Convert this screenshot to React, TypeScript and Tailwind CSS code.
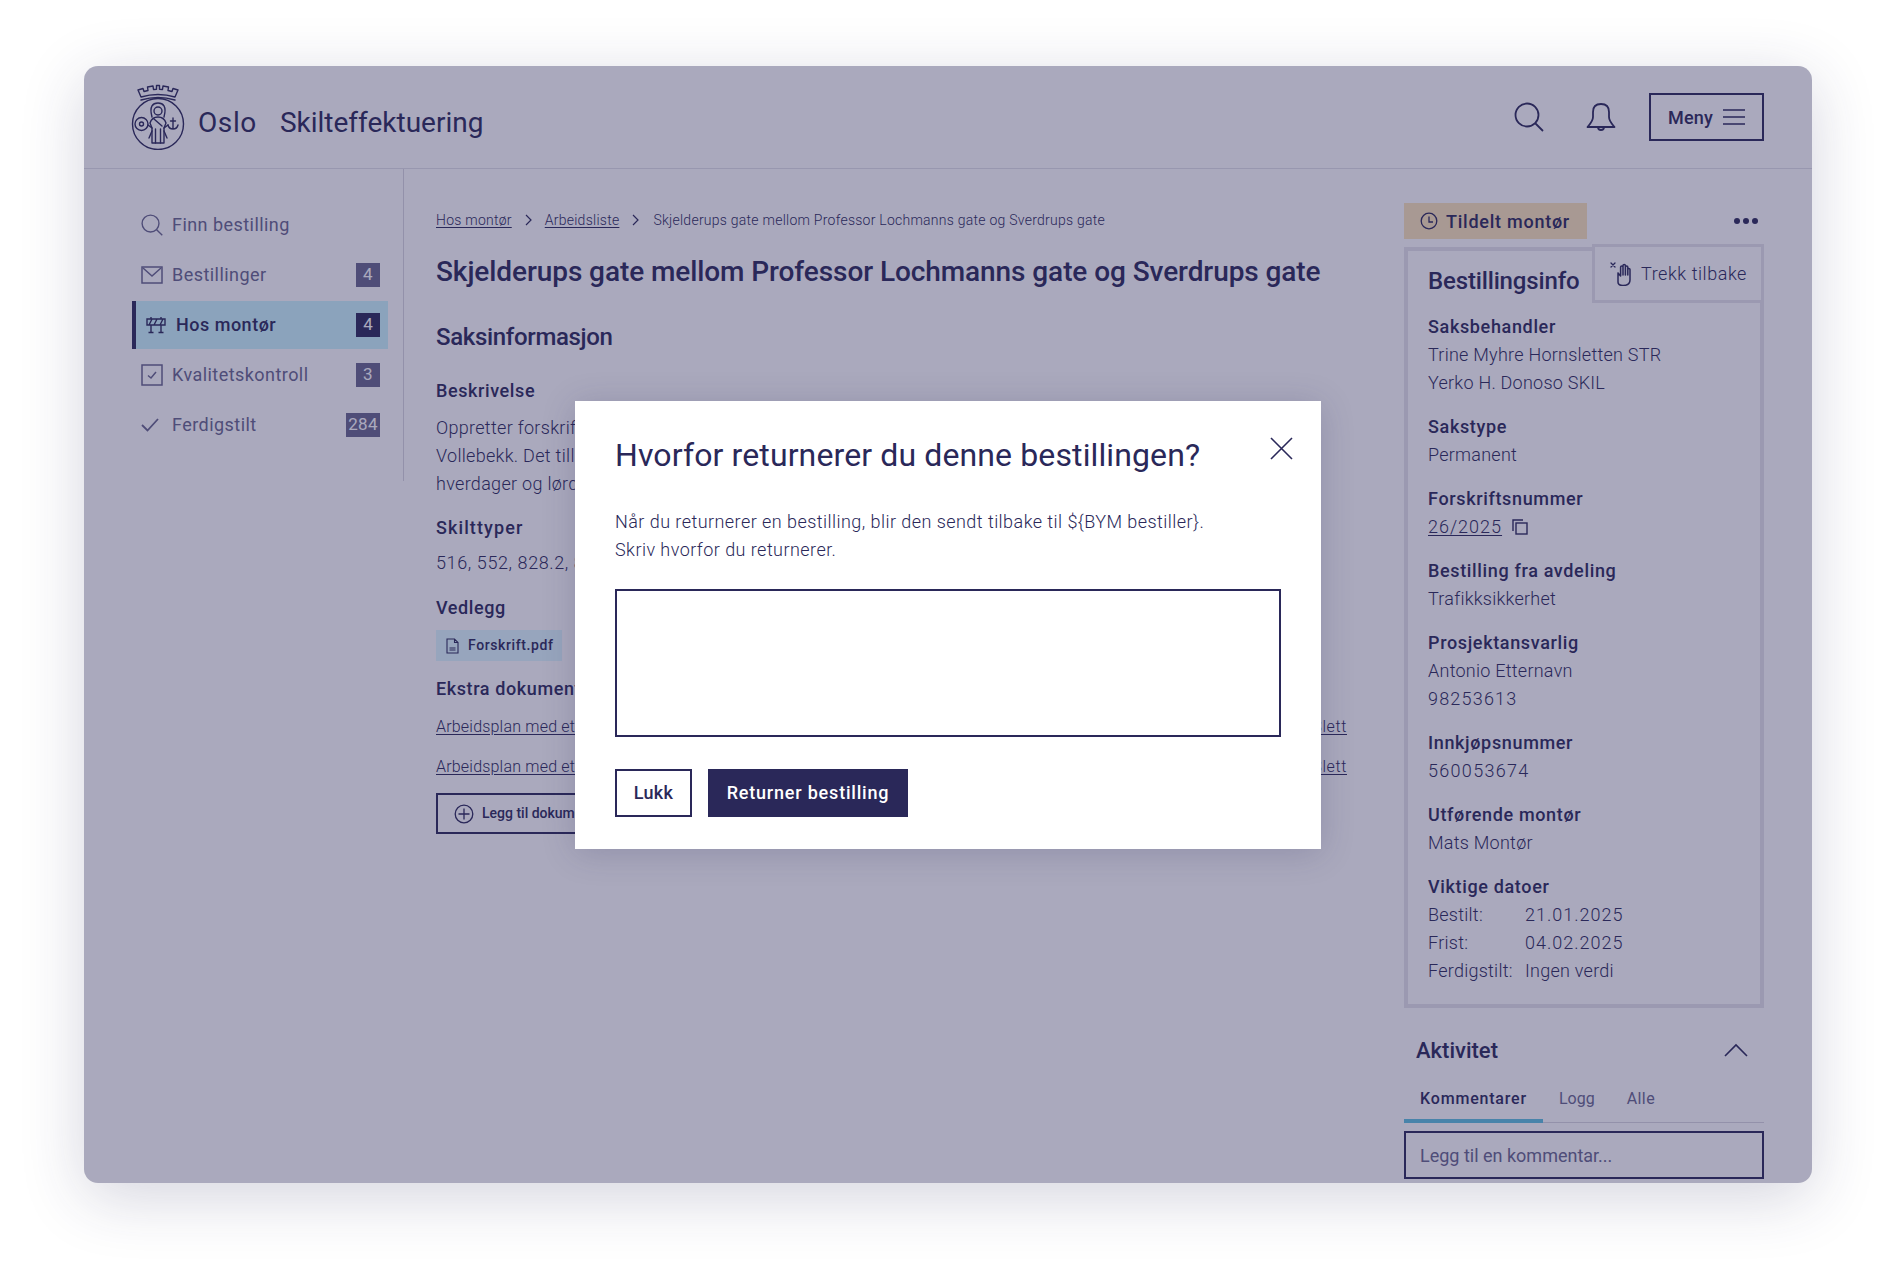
const navy = '#2a2859'

function Logo() {
  return (
    <svg width="54" height="66" viewBox="0 0 54 66" fill="none" stroke={navy} strokeWidth="1.4" strokeLinejoin="round" strokeLinecap="round">
      <path d="M7 6 L10 13 Q27 8 44 13 L47 6 L42 4.5 L41 7.5 L37 6.5 L37.5 3 L32 2 L31.5 5.5 L28.5 5.2 L28.5 1.5 L25.5 1.5 L25.5 5.2 L22.5 5.5 L22 2 L16.5 3 L17 6.5 L13 7.5 L12 4.5 Z" />
      <path d="M10 16 Q27 11 44 16" />
      <circle cx="27" cy="40" r="25.5" />
      <path d="M21 33 C18 22 22 19 27 19 C32 19 36 22 33 33" />
      <circle cx="27" cy="27" r="4" />
      <path d="M19 39 Q21 33 27 33 Q33 33 35 39 L33 44 L33 59 L21 59 L21 44 Z" />
      <path d="M24.5 45 L24.5 59 M29.5 45 L29.5 59 M23 35 L31 42" />
      <path d="M17 41 L21 44 M37 41 L33 44 M18 54 L21 47 M36 54 L33 47" />
      <circle cx="10.5" cy="40" r="6.5" />
      <circle cx="10.5" cy="40" r="2" />
      <path d="M42 34 L42 45 M39.5 37 L44.5 37 M37 41 Q38 45 42 45 Q46 45 47 41" />
    </svg>
  )
}

function SearchIcon({ size }: { size: number }) {
  return (
    <svg width={size} height={size} viewBox="0 0 30 30" fill="none" stroke="currentColor" strokeWidth={size > 25 ? 1.8 : 1.9}>
      <circle cx="13" cy="13" r="11.5" />
      <path d="M21 21 L29 29" />
    </svg>
  )
}

function BellIcon() {
  return (
    <svg width="30" height="30" viewBox="0 0 30 30" fill="none" stroke="currentColor" strokeWidth="1.8" strokeLinejoin="round">
      <path d="M15 2 C9 2 7 6 7 10 L7 15 C7 19 4 22 1.5 25 L28.5 25 C26 22 23 19 23 15 L23 10 C23 6 21 2 15 2 Z" />
      <path d="M12 25 C12 29 18 29 18 25" />
    </svg>
  )
}

function MenuIcon() {
  return (
    <svg width="22" height="16" viewBox="0 0 22 16" fill="none" stroke="currentColor" strokeWidth="1.5">
      <path d="M0 1 H22 M0 8 H22 M0 15 H22" />
    </svg>
  )
}

function MailIcon() {
  return (
    <svg width="22" height="18" viewBox="0 0 22 18" fill="none" stroke="currentColor" strokeWidth="1.5">
      <rect x="1" y="1" width="20" height="16" />
      <path d="M2 2 L11 10 L20 2" />
    </svg>
  )
}

function BarrierIcon() {
  return (
    <svg width="20" height="18" viewBox="0 0 20 18" fill="none" stroke="currentColor" strokeWidth="1.4">
      <path d="M1 3 H19 V9 H1 Z M6 3 L3 9 M11 3 L8 9 M17 3 L14 9" />
      <path d="M5 9 V16 M15 9 V16 M2.5 16.5 H7.5 M12.5 16.5 H17.5 M5 1 V3 M15 1 V3" />
    </svg>
  )
}

function CheckboxIcon() {
  return (
    <svg width="22" height="22" viewBox="0 0 22 22" fill="none" stroke="currentColor" strokeWidth="1.5">
      <rect x="1" y="1" width="20" height="20" />
      <path d="M7 11.5 L10 14 L15 8" />
    </svg>
  )
}

function CheckIcon() {
  return (
    <svg width="18" height="14" viewBox="0 0 18 14" fill="none" stroke="currentColor" strokeWidth="1.8">
      <path d="M1 7 L6.5 12.5 L17 1" />
    </svg>
  )
}

function ClockIcon() {
  return (
    <svg width="18" height="18" viewBox="0 0 18 18" fill="none" stroke="currentColor" strokeWidth="1.3">
      <circle cx="9" cy="9" r="7.8" />
      <path d="M9 4.5 V10 H13" />
    </svg>
  )
}

function CopyIcon() {
  return (
    <svg width="16" height="16" viewBox="0 0 16 16" fill="none" stroke="currentColor" strokeWidth="1.4">
      <path d="M1 12 V1 H11" />
      <rect x="4" y="4" width="11" height="11" />
    </svg>
  )
}

function PdfIcon() {
  return (
    <svg width="13" height="16" viewBox="0 0 13 16" fill="none" stroke="currentColor" strokeWidth="1.1">
      <path d="M1 1 H8.5 L12 4.5 V15 H1 Z M8.5 1 V4.5 H12 M3.5 10 H9.5 M3.5 12 H9.5" />
    </svg>
  )
}

function PlusCircleIcon() {
  return (
    <svg width="20" height="20" viewBox="0 0 20 20" fill="none" stroke="currentColor" strokeWidth="1.3">
      <circle cx="10" cy="10" r="8.8" />
      <path d="M10 4.5 V15.5 M4.5 10 H15.5" />
    </svg>
  )
}

function ChevronRight() {
  return (
    <svg className="mx-[13px]" width="7" height="12" viewBox="0 0 7 12" fill="none" stroke={navy} strokeWidth="1.2">
      <path d="M1 1 L6 6 L1 11" />
    </svg>
  )
}

function HandIcon() {
  return (
    <svg width="24" height="24" viewBox="0 0 24 24" fill="none" stroke="currentColor" strokeWidth="1.5" strokeLinecap="round" strokeLinejoin="round">
      <path d="M1 1 L5 5 M5 1 L1 5" strokeWidth="1.3" />
      <path d="M8 11 V20 C8 22 10 23.5 13 23.5 C17 23.5 20 22 20 18 V7.5 C20 6 17.8 6 17.8 7.5 V13 M17.8 13 V5 C17.8 3.5 15.4 3.5 15.4 5 V13 M15.4 13 V3.5 C15.4 2 13 2 13 3.5 V13 M13 13 V5 C13 3.5 10.6 3.5 10.6 5 V14 L8 11" />
    </svg>
  )
}

function NavItem({ icon, label, count, active }: { icon: React.ReactNode; label: string; count?: string; active?: boolean }) {
  if (active) {
    return (
      <div className="flex items-center h-[48px] bg-[#cbf5fd] border-l-4 border-[#2a2859] pl-[10px] pr-[8px] text-[#2a2859]">
        <span className="w-[30px] flex"><BarrierIcon /></span>
        <span className="flex-1 text-[18px] font-medium tracking-[0.5px] mt-[-1px]">{label}</span>
        <span className="h-[24px] min-w-[24px] px-[3px] flex items-center justify-center bg-[#2a2859] text-white text-[17px]">{count}</span>
      </div>
    )
  }
  return (
    <div className="flex items-center h-[48px] pl-[9px] pr-[8px] text-[#68668d]">
      <span className="w-[31px] flex">{icon}</span>
      <span className="flex-1 text-[18px] tracking-[0.45px] mt-[-1px]">{label}</span>
      {count && <span className="h-[24px] min-w-[24px] px-[2px] flex items-center justify-center bg-[#68668d] text-white text-[17px] tracking-[0.4px]">{count}</span>}
    </div>
  )
}

function Info({ label, children }: { label: string; children: React.ReactNode }) {
  return (
    <div className="text-[18px] leading-[28px]">
      <div className="font-medium text-[#2a2859] tracking-[0.65px]">{label}</div>
      <div className="font-light text-[#2a2859] tracking-[0.25px]">{children}</div>
    </div>
  )
}

function DocLink() {
  return (
    <div className="flex justify-between h-[28px] items-center text-[16px] font-light text-[#2a2859] tracking-[0.2px]">
      <span className="underline underline-offset-2">Arbeidsplan med etablering av skilt.pdf</span>
      <span className="underline underline-offset-2 tracking-[0.6px]">Slett</span>
    </div>
  )
}

export default function App() {
  return (
    <div className="h-[1285px] bg-white pt-[66px] pl-[84px] text-[#2a2859] font-['Roboto',sans-serif]">
      <div className="relative w-[1728px] h-[1117px] rounded-[14px] overflow-hidden bg-white shadow-[0_14px_64px_rgba(42,40,89,0.2)]">
        <header className="flex items-center h-[103px] pl-[47px] pr-[48px] border-b border-[#e2e1e8]">
          <Logo />
          <span className="ml-[13px] mt-[12px] text-[28px] tracking-[0.6px]">Oslo</span>
          <span className="ml-[23px] mt-[12px] text-[28px]">Skilteffektuering</span>
          <div className="ml-auto flex items-center">
            <SearchIcon size={30} />
            <span className="ml-[42px]"><BellIcon /></span>
            <button className="ml-[33px] w-[115px] h-[48px] border-2 border-[#2a2859] flex items-center justify-center gap-[10px] text-[18px] font-medium tracking-[0.2px]">
              Meny <MenuIcon />
            </button>
          </div>
        </header>

        <div className="flex items-start">
          <aside className="w-[320px] shrink-0 pt-[32px] pb-[32px] pl-[48px] pr-[15px] border-r border-[#d9d8e0] flex flex-col gap-[2px]">
            <NavItem icon={<SearchIcon size={22} />} label="Finn bestilling" />
            <NavItem icon={<MailIcon />} label="Bestillinger" count="4" />
            <NavItem icon={<BarrierIcon />} label="Hos montør" count="4" active />
            <NavItem icon={<CheckboxIcon />} label="Kvalitetskontroll" count="3" />
            <NavItem icon={<CheckIcon />} label="Ferdigstilt" count="284" />
          </aside>

          <main className="flex-1 min-w-0 pl-[32px] pr-[57px] pt-[41px]">
            <div className="flex items-center h-[20px] text-[14px] font-light text-[#2a2859] tracking-[0.25px]">
              <span className="underline underline-offset-2">Hos montør</span>
              <ChevronRight />
              <span className="underline underline-offset-2">Arbeidsliste</span>
              <ChevronRight />
              <span className="ml-[1px]">Skjelderups gate mellom Professor Lochmanns gate og Sverdrups gate</span>
            </div>
            <h1 className="mt-[24px] text-[28px] leading-[36px] font-medium tracking-[-0.08px]">Skjelderups gate mellom Professor Lochmanns gate og Sverdrups gate</h1>
            <h2 className="mt-[31px] text-[24px] leading-[32px] font-medium tracking-[-0.33px]">Saksinformasjon</h2>
            <div className="mt-[24px] text-[18px] leading-[28px] font-medium tracking-[0.6px]">Beskrivelse</div>
            <p className="mt-[9px] text-[18px] leading-[28px] font-light w-[860px] tracking-[0.3px]">
              Oppretter forskrift om parkering forbudt langs Skjelderups gate på
              <br />
              Vollebekk. Det tillates kun korttidsparkering i to timer på
              <br />
              hverdager og lørdager mellom klokken 8 og 16.
            </p>
            <div className="mt-[16px] text-[18px] leading-[28px] font-medium tracking-[1.1px]">Skilttyper</div>
            <div className="mt-[7px] text-[18px] leading-[28px] font-light tracking-[0.6px]">516, 552, 828.2, 802.1</div>
            <div className="mt-[17px] text-[18px] leading-[28px] font-medium tracking-[0.6px]">Vedlegg</div>
            <div className="mt-[8px] w-[126px] h-[31px] bg-[#dff8ff] flex items-center gap-[9px] pl-[10px] text-[14px] font-medium tracking-[0.6px]">
              <PdfIcon /> Forskrift.pdf
            </div>
            <div className="mt-[14px] text-[18px] leading-[28px] font-medium tracking-[0.6px]">Ekstra dokumentasjon</div>
            <div className="mt-[10px] flex flex-col gap-[12px]">
              <DocLink />
              <DocLink />
            </div>
            <button className="mt-[12px] h-[41px] w-[220px] border-2 border-[#2a2859] flex items-center gap-[8px] pl-[16px] text-[14px] font-medium">
              <PlusCircleIcon /> Legg til dokument
            </button>
          </main>

          <section className="relative w-[360px] shrink-0 mr-[48px] pt-[34px]">
            <div className="flex items-center justify-between">
              <div className="w-[183px] h-[36px] bg-[#fce4ba] flex items-center gap-[8px] pl-[16px] text-[18px] font-medium tracking-[0.75px]">
                <ClockIcon /> Tildelt montør
              </div>
              <div className="flex gap-[3px] mr-[6px]">
                <span className="w-[6px] h-[6px] rounded-full bg-[#2a2859]" />
                <span className="w-[6px] h-[6px] rounded-full bg-[#2a2859]" />
                <span className="w-[6px] h-[6px] rounded-full bg-[#2a2859]" />
              </div>
            </div>
            <div className="mt-[8px] border-4 border-[#e6e5eb] pl-[20px] pt-[14px] pb-[19px] flex flex-col gap-[16px]">
              <h2 className="text-[24px] leading-[32px] font-medium tracking-[-0.15px]">Bestillingsinfo</h2>
              <Info label="Saksbehandler">Trine Myhre Hornsletten STR<br />Yerko H. Donoso SKIL</Info>
              <Info label="Sakstype">Permanent</Info>
              <Info label="Forskriftsnummer">
                <span className="flex items-center gap-[10px]"><span className="underline underline-offset-2 tracking-[1px]">26/2025</span><CopyIcon /></span>
              </Info>
              <Info label="Bestilling fra avdeling">Trafikksikkerhet</Info>
              <Info label="Prosjektansvarlig">Antonio Etternavn<br /><span className="tracking-[1.2px]">98253613</span></Info>
              <Info label="Innkjøpsnummer"><span className="tracking-[1.3px]">560053674</span></Info>
              <Info label="Utførende montør">Mats Montør</Info>
              <Info label="Viktige datoer">
                <div className="grid grid-cols-[97px_1fr]">
                  <span>Bestilt:</span><span className="tracking-[1px]">21.01.2025</span>
                  <span>Frist:</span><span className="tracking-[1px]">04.02.2025</span>
                  <span>Ferdigstilt:</span><span>Ingen verdi</span>
                </div>
              </Info>
            </div>
            <div className="mt-[25px] h-[34px] flex items-center justify-between pl-[12px] pr-[16px]">
              <span className="text-[22px] font-medium">Aktivitet</span>
              <svg width="24" height="14" viewBox="0 0 24 14" fill="none" stroke="currentColor" strokeWidth="1.6"><path d="M1 13 L12 2 L23 13" /></svg>
            </div>
            <div className="mt-[11px] h-[45px] flex border-b border-[#d9d8e0] text-[16px]">
              <div className="w-[139px] h-[45px] flex items-center justify-center border-b-4 border-[#5cc0e0] font-medium tracking-[0.8px]">Kommentarer</div>
              <div className="ml-[16px] h-[41px] flex items-center text-[#68668d]">Logg</div>
              <div className="ml-[32px] h-[41px] flex items-center text-[#68668d] tracking-[0.4px]">Alle</div>
            </div>
            <div className="mt-[8px] h-[48px] border-2 border-[#2a2859] flex items-center pl-[14px] text-[18px] text-[#68668d]">Legg til en kommentar...</div>
            <div className="absolute right-0 top-[75px] w-[172px] h-[59px] bg-white border-[3px] border-[#e6e5eb] flex items-center pl-[15px] gap-[7px] text-[18px] font-light tracking-[0.55px]">
              <HandIcon />
              Trekk tilbake
            </div>
          </section>
        </div>

        <div className="absolute inset-0 bg-[#2a2859]/40 flex items-center justify-center">
          <div className="relative w-[746px] h-[448px] bg-white pl-[40px] pr-[40px] pt-[34px] shadow-[0_4px_32px_rgba(42,40,89,0.2)]">
            <h2 className="text-[32px] leading-[40px] tracking-[0.12px]">Hvorfor returnerer du denne bestillingen?</h2>
            <p className="mt-[33px] text-[18px] leading-[28px] font-light tracking-[0.45px]">
              Når du returnerer en bestilling, blir den sendt tilbake til {'${BYM bestiller}'}.
              <br />
              Skriv hvorfor du returnerer.
            </p>
            <div className="mt-[25px] h-[148px] border-2 border-[#2a2859]" />
            <div className="mt-[32px] flex gap-[16px]">
              <button className="w-[77px] h-[48px] border-2 border-[#2a2859] text-[18px] font-medium tracking-[0.3px]">Lukk</button>
              <button className="w-[200px] h-[48px] bg-[#2a2859] text-white text-[18px] font-medium tracking-[0.8px]">Returner bestilling</button>
            </div>
            <svg className="absolute top-[36px] right-[28px]" width="23" height="23" viewBox="0 0 23 23" fill="none" stroke="currentColor" strokeWidth="1.6"><path d="M1 1 L22 22 M22 1 L1 22" /></svg>
          </div>
        </div>
      </div>
    </div>
  )
}
